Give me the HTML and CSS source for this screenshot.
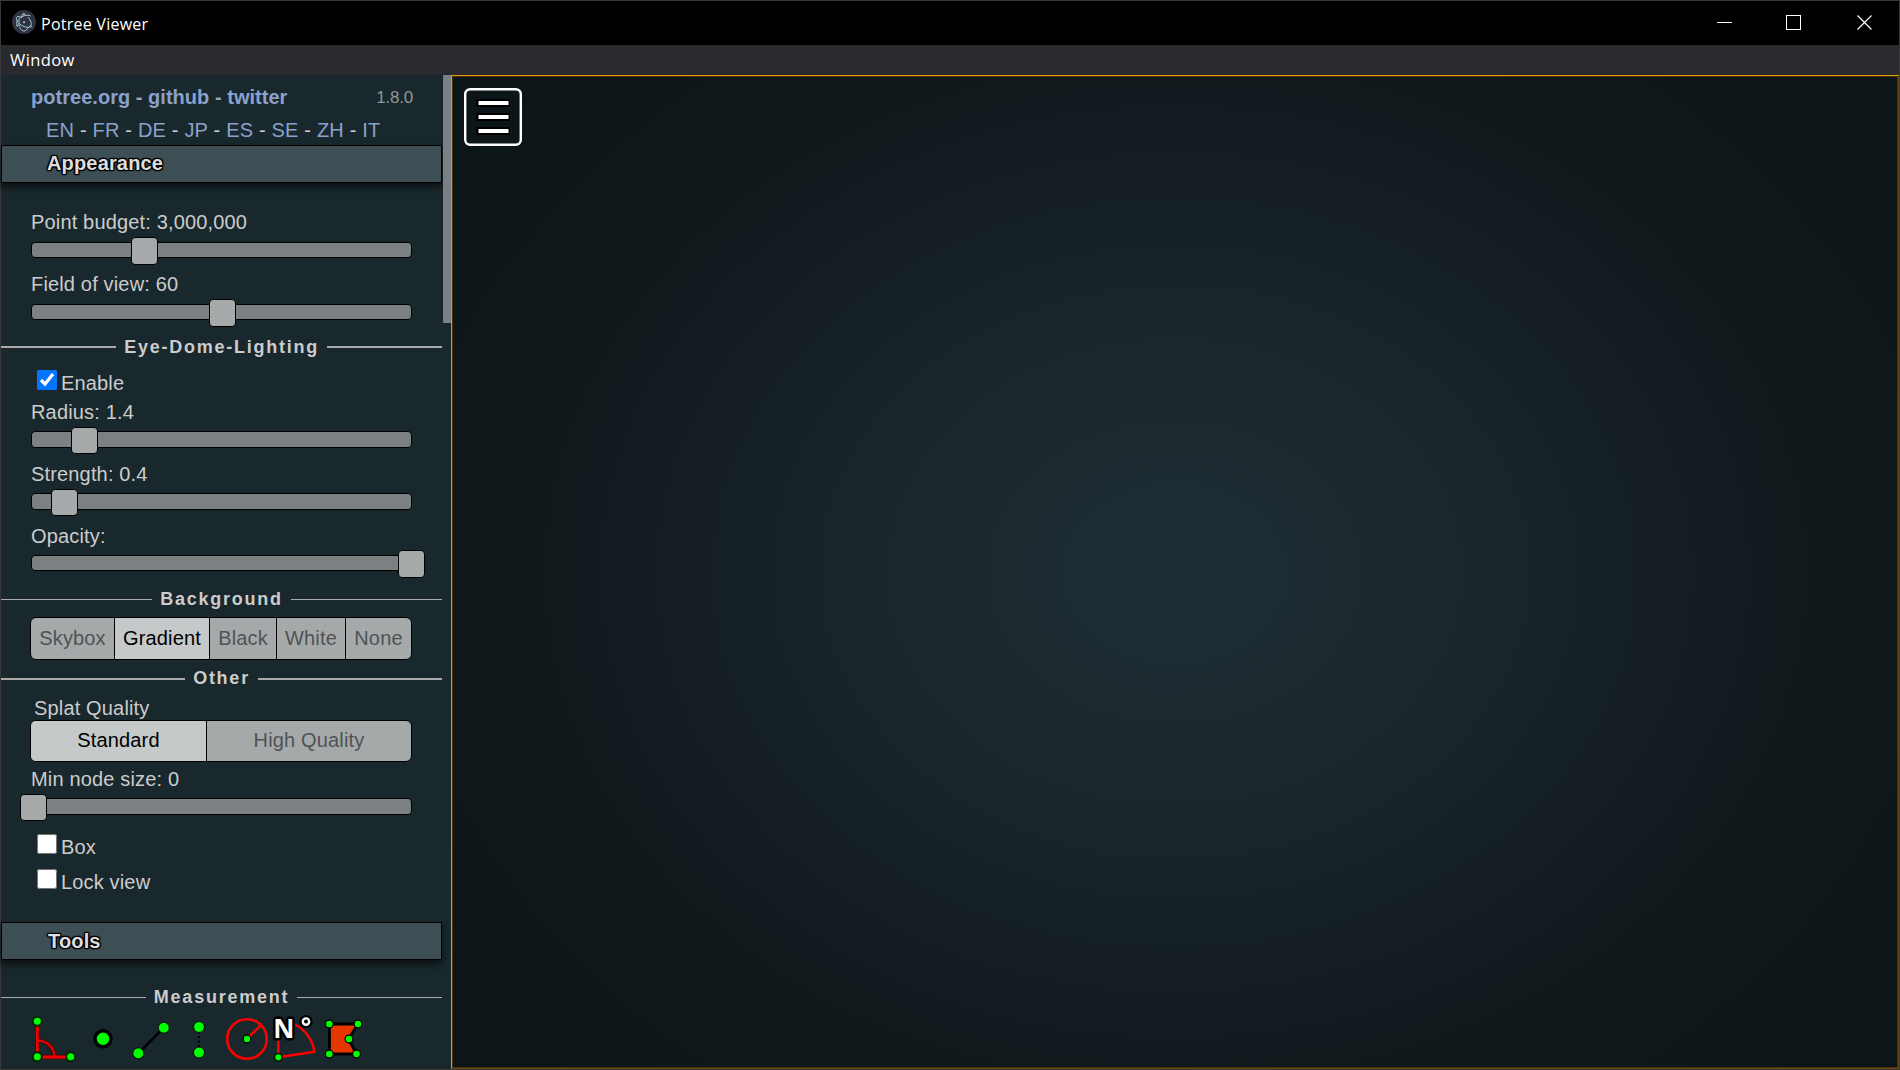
FILE: index.html
```html
<!DOCTYPE html>
<html lang="en">
<head>
<meta charset="utf-8">
<title>Potree Viewer</title>
<link rel="stylesheet" href="styles.css">
</head>
<body>
<div class="window">
  <header class="titlebar">
    <svg class="app-icon" viewBox="0 0 24 24" fill="none" stroke="#a3c9d3" stroke-width="1">
      <circle cx="12" cy="12" r="12" fill="#2f3241" stroke="none"/>
      <path d="M5 14.6C3.600 12.500 5.800 9 10 6.700 13.500 4.800 17 4.700 18.500 6M16 7.200c3 3.200 4.200 7.400 2.600 9M17.500 17.200c-2.500.7-7-.5-10.300-3.600C4.500 11 3.600 8 5 6.900c1-.7 3-.3 5 .7M7.500 16.500c.9 2.800 2.600 4.500 4.500 4.500 1.800 0 3.400-1.500 4.300-4M12 4c-1.200.2-2.200 1.200-3 2.700M7.300 9.500C6.700 12 6.800 14 7.400 16"/>
      <circle cx="12" cy="12.300" r=".7" fill="#a3c9d3"/><circle cx="5.300" cy="15.500" r=".8"/><circle cx="18.500" cy="16.500" r=".8"/><circle cx="12" cy="4.300" r=".8"/>
    </svg>
    <span class="title">Potree Viewer</span>
    <svg class="controls" width="250" height="44" fill="none" stroke="#fff" shape-rendering="crispEdges">
      <path d="M68 21.500h15M137.500 14.500h14v14h-14z"/>
      <path d="M208.500 14.500l14 14m0-14l-14 14" shape-rendering="auto" stroke-width="1.200"/>
    </svg>
  </header>
  <nav class="menubar">Window</nav>
  <main class="content">
    <aside class="sidebar">
      <div class="brand"><span class="links"><a>potree.org</a> - <a>github</a> - <a>twitter</a></span><span class="version">1.8.0</span></div>
      <div class="langs"><a>EN</a> - <a>FR</a> - <a>DE</a> - <a>JP</a> - <a>ES</a> - <a>SE</a> - <a>ZH</a> - <a>IT</a></div>
      <h3 class="section">Appearance</h3>
      <div class="group first">
        <label>Point budget: 3,000,000</label>
        <div class="slider"><i class="handle" style="left:26.1%"></i></div>
        <label>Field of view: 60</label>
        <div class="slider"><i class="handle" style="left:46.7%"></i></div>
      </div>
      <div class="divider thick dome"><span>Eye-Dome-Lighting</span></div>
      <div class="check enable"><input type="checkbox" checked><span>Enable</span></div>
      <div class="group low">
        <label>Radius: 1.4</label>
        <div class="slider tall"><i class="handle" style="left:10.3%"></i></div>
        <label>Strength: 0.4</label>
        <div class="slider tall"><i class="handle" style="left:5.1%"></i></div>
        <label>Opacity:</label>
        <div class="slider opacity"><i class="handle" style="left:96.700%"></i></div>
      </div>
      <div class="divider background"><span>Background</span></div>
      <div class="buttons backgrounds"><b>Skybox</b><b class="on">Gradient</b><b>Black</b><b>White</b><b>None</b></div>
      <div class="divider thick other"><span>Other</span></div>
      <label class="splat">Splat Quality</label>
      <div class="buttons quality"><b class="on">Standard</b><b>High Quality</b></div>
      <div class="group node">
        <label>Min node size: 0</label>
        <div class="slider tall"><i class="handle" style="left:-3.100%"></i></div>
      </div>
      <div class="check box"><input type="checkbox"><span>Box</span></div>
      <div class="check lock"><input type="checkbox"><span>Lock view</span></div>
      <h3 class="section tools">Tools</h3>
      <div class="divider measure"><span>Measurement</span></div>
      <div class="icons">
        <svg viewBox="0 0 48 48"><g fill="none" stroke="#4a0808" stroke-width="4.600"><path d="M6.300 6v36H40M6 25.500c9 0 17 6 17.500 16.500"/></g><g fill="none" stroke="#f00000" stroke-width="2.800"><path d="M6.300 6v36H40"/><path d="M6 25.500c9 0 17 6 17.500 16.500" stroke-width="2"/></g><g fill="#0f0" stroke="#032803" stroke-width="2"><circle cx="6.300" cy="6.200" r="4.500"/><circle cx="6.300" cy="41.800" r="4.500"/><circle cx="39.700" cy="41.800" r="4.500"/></g></svg>
        <svg viewBox="0 0 48 48"><circle cx="24" cy="23.800" r="8" fill="#0f0" stroke="#000" stroke-width="3.500"/></svg>
        <svg viewBox="0 0 48 48"><path d="M11.500 38.300L36.700 12.700" stroke="#000" stroke-width="2.600"/><g fill="#0f0" stroke="#000" stroke-width=".8"><circle cx="11.300" cy="38.300" r="5.400"/><circle cx="36.800" cy="12.700" r="5.400"/></g></svg>
        <svg viewBox="0 0 48 48"><path d="M24 12v26" stroke="#000" stroke-width="2" stroke-dasharray="2 2.500"/><g fill="#0f0" stroke="#000" stroke-width=".8"><circle cx="24" cy="12" r="5.400"/><circle cx="24" cy="37.500" r="5.400"/></g></svg>
        <svg viewBox="0 0 48 48"><g fill="none" stroke="#f00" stroke-width="2.500"><circle cx="24" cy="24" r="19.800"/><path d="M24 24l13.500-13.500"/></g><circle cx="24" cy="24" r="3.800" fill="#0f0" stroke="#000" stroke-width="1.200"/></svg>
        <svg viewBox="0 0 48 48"><path d="M7.300 20v22.300L43.500 36.700Q40 18 24 9.500" fill="none" stroke="#f00" stroke-width="2.500"/><circle cx="7.300" cy="42.300" r="3.700" fill="#0f0" stroke="#000" stroke-width="1.200"/><text class="north" x="2.300" y="22.700">N</text><circle cx="35" cy="6.600" r="3.200" fill="#000" stroke="#000" stroke-width="7"/><circle cx="35" cy="6.600" r="3.200" fill="#000" stroke="#fff" stroke-width="2.400"/></svg>
        <svg viewBox="0 0 48 48"><path d="M10.500 9H39L29.500 24 37.500 39h-27z" fill="#e83600" stroke="#000" stroke-width="2.800"/><g fill="#0f0" stroke="#000" stroke-width="1.200"><circle cx="10.300" cy="9" r="3.900"/><circle cx="39" cy="9" r="3.900"/><circle cx="30" cy="24" r="3.900"/><circle cx="37.500" cy="39" r="3.900"/><circle cx="10.300" cy="39" r="3.900"/></g></svg>
      </div>
    </aside>
    <div class="scrollbar"><div class="thumb"></div></div>
    <section class="viewport">
      <svg class="menu" width="58" height="58"><rect x="1.200" y="1.200" width="55.600" height="55.600" rx="5" fill="none" stroke="#fff" stroke-width="2.400"/><path d="M12 15h34M12 29h34M12 43h34" stroke="#000" stroke-width="8"/><path d="M14.500 15h30M14.500 29h30M14.500 43h30" stroke="#fff" stroke-width="4"/></svg>
    </section>
  </main>
</div>
</body>
</html>
```
FILE: styles.css
```css
* { box-sizing: border-box; }
body { margin: 0; background: #383838; color: #ccc; font: 20px/24px "Liberation Sans", Arial, sans-serif; }
.window { width: 1900px; height: 1070px; padding: 1px; display: flex; flex-direction: column; overflow: hidden; }
.titlebar { height: 44px; flex: none; background: #000; display: flex; align-items: center; }
.app-icon { width: 24px; height: 24px; margin: 0 0 2px 11px; }
.title { margin-left: 5px; flex: 1; color: #fff; font: 16px/24px "Open Sans", "Noto Sans", sans-serif; letter-spacing: .25px; padding-top: 2px; }
.menubar { height: 30px; flex: none; background: #292a2e; padding-left: 9px; color: #fff; font: 16.500px/30px "Open Sans", "Noto Sans", sans-serif; letter-spacing: .4px; }
.content { height: 994px; display: flex; background: #19282c; }
.sidebar { width: 442px; flex: none; display: flex; flex-direction: column; letter-spacing: .16px; }
.sidebar > * { flex: none; }
a { color: #8aa1cc; }
.brand { height: 37px; padding: 10px 30px 0 30px; display: flex; justify-content: space-between; }
.links { font-weight: bold; color: #9aa5b0; letter-spacing: .03px; }
.version { font-size: 17px; color: #8e9799; letter-spacing: -.2px; padding-top: 1px; }
.langs { height: 33px; padding: 6px 0 0 45px; letter-spacing: .19px; }
.section { height: 38px; width: 441px; margin: 0; padding: 5px 0 0 45px; border: 1px solid #000; background: #3d4f55; box-shadow: 0 4px 6px #0b1113; font-size: 20px; line-height: 24px; color: #ddd; text-shadow: 1px 1px 1px #000, -1px 1px 1px #000, 1px -1px 1px #000, -1px -1px 1px #000, 0 1px 1px #000, 0 -1px 1px #000, 1px 0 1px #000, -1px 0 1px #000; }
label { display: block; height: 24px; }
.group { padding: 0 24px 0 30px; }
.first { margin-top: 27px; }
.slider { position: relative; width: 381px; height: 16px; margin: 8px 0 14px; border: 1px solid #000; border-radius: 4px; background: #7b8182; }
.tall { height: 17px; margin: 7px 0 14px; }
.opacity { margin: 7px 0 14px; }
.handle { position: absolute; top: -6px; width: 27px; height: 28px; border: 1px solid #000; border-radius: 4px; background: #a5a9aa; }
.tall .handle { top: -5px; height: 27px; }
.divider { height: 24px; width: 441px; display: flex; align-items: center; gap: 8px; font-size: 18px; font-weight: bold; letter-spacing: 1.750px; }
.divider::before, .divider::after { content: ""; height: 1px; flex: 1; background: #aaa; }
.thick::before, .thick::after { height: 2px; }
.dome { margin-top: 1px; }
.check { display: flex; height: 24px; padding-left: 36px; gap: 4px; }
.check input { width: 20px; height: 20px; margin: 0; flex: none; }
.check span { padding-top: 1px; }
.enable { margin: 11px 0 0; }
.low { margin-top: 6px; }
.background { margin-top: 2px; }
.buttons { display: grid; width: 382px; margin-left: 29px; border: 1px solid #000; border-radius: 6px; overflow: hidden; background: #a5a9aa; }
.buttons b { font-weight: normal; color: #505355; text-align: center; padding-top: 7px; border-right: 1px solid #000; }
.buttons b:last-child { border: 0; }
.buttons .on { background: #c5c9ca; color: #000; }
.backgrounds { height: 43px; margin-top: 6px; grid-template-columns: 84px 95px 67px 69px 1fr; }
.backgrounds b { padding-top: 8px; }
.other { margin-top: 7px; }
.other span { padding-bottom: 2px; }
.splat { margin: 5px 0 0 33px; }
.quality { height: 42px; grid-template-columns: 176px 1fr; }
.node { margin-top: 5px; }
.box { margin-top: 5px; }
.lock { margin-top: 11px; }
.tools { margin-top: 29px; padding-left: 46px; padding-top: 6px; }
.measure { margin-top: 25px; }
.icons { display: flex; height: 48px; margin: 6px 0 0 30px; }
.icons svg { width: 48px; height: 48px; overflow: visible; }
.north { font: bold 26px "Open Sans", sans-serif; fill: #fff; stroke: #000; stroke-width: 5px; paint-order: stroke; stroke-linejoin: round; }
.scrollbar { width: 8px; flex: none; }
.thumb { height: 248px; background: #7b8182; }
.viewport { flex: 1; border: 1px solid; border-color: #e39a10 #6b470b #6b470b #e39a10; padding: 12px; background: radial-gradient(ellipse 55% 65% at 50% 50%, #1f2e35 0%, #19262c 40%, #11191d 78%, #0c1517 110%); box-shadow: inset 0 0 0 1px #4a3208; }
.menu { display: block; }
```
